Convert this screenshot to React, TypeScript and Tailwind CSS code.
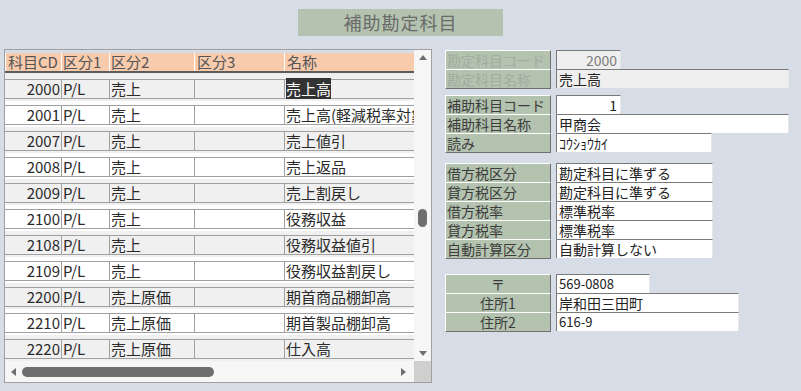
import React from "react";

const font = { fontFamily: '"Noto Sans CJK JP", "Noto Sans", sans-serif' };

type Row = { cd: string; k1: string; k2: string; k3: string; name: string; selected?: boolean };

const rows: Row[] = [
  { cd: "2000", k1: "P/L", k2: "売上", k3: "", name: "売上高", selected: true },
  { cd: "2001", k1: "P/L", k2: "売上", k3: "", name: "売上高(軽減税率対象)" },
  { cd: "2007", k1: "P/L", k2: "売上", k3: "", name: "売上値引" },
  { cd: "2008", k1: "P/L", k2: "売上", k3: "", name: "売上返品" },
  { cd: "2009", k1: "P/L", k2: "売上", k3: "", name: "売上割戻し" },
  { cd: "2100", k1: "P/L", k2: "売上", k3: "", name: "役務収益" },
  { cd: "2108", k1: "P/L", k2: "売上", k3: "", name: "役務収益値引" },
  { cd: "2109", k1: "P/L", k2: "売上", k3: "", name: "役務収益割戻し" },
  { cd: "2200", k1: "P/L", k2: "売上原価", k3: "", name: "期首商品棚卸高" },
  { cd: "2210", k1: "P/L", k2: "売上原価", k3: "", name: "期首製品棚卸高" },
  { cd: "2220", k1: "P/L", k2: "売上原価", k3: "", name: "仕入高" },
];

function Arrow({ dir }: { dir: "up" | "down" | "left" | "right" }) {
  const pts = {
    up: "0,5 4,0 8,5",
    down: "0,0 8,0 4,5",
    left: "5,0 5,8 0,4",
    right: "0,0 0,8 5,4",
  }[dir];
  const vertical = dir === "up" || dir === "down";
  return (
    <svg width={vertical ? 8 : 5} height={vertical ? 5 : 8} viewBox={vertical ? "0 0 8 5" : "0 0 5 8"}>
      <polygon points={pts} fill="#6e6e6e" />
    </svg>
  );
}

function Label({ text, last, disabled, center }: { text: string; last?: boolean; disabled?: boolean; center?: boolean }) {
  return (
    <div
      className={`w-[106px] h-[19px] bg-[#b3c3af] border-t border-l border-r border-t-white border-l-white border-r-[#6f6f6f] text-[14px] leading-[18px] px-[1px] whitespace-nowrap ${
        last ? "border-b border-b-[#6f6f6f] h-[20px]" : ""
      } ${disabled ? "text-[#a2ac9f]" : "text-[#3c3c3c]"} ${center ? "text-center" : ""}`}
    >
      {text}
    </div>
  );
}

function Value({
  text,
  w,
  right,
  gray,
  dim,
  size = "text-[14px]",
}: {
  text: string;
  w: string;
  right?: boolean;
  gray?: boolean;
  dim?: boolean;
  size?: string;
}) {
  return (
    <div
      className={`${w} h-[19px] border-t border-l border-r border-t-[#7a7a7a] border-l-[#7a7a7a] border-r-[#e6e6e6] ${
        gray ? "bg-[#efefef]" : "bg-white"
      } ${dim ? "text-[#7c7c7c]" : "text-[#222]"} ${right ? "text-right pr-[3px]" : "pl-[2px]"} ${size} leading-[18px] whitespace-nowrap`}
    >
      {text}
    </div>
  );
}

function FieldRow({ children }: { children: React.ReactNode }) {
  return <div className="flex items-start gap-[5px]">{children}</div>;
}

export default function App() {
  return (
    <div className="w-[801px] h-[391px] bg-[#d6dde7] overflow-hidden" style={font}>
      {/* Title */}
      <div className="flex justify-center pt-[9px]">
        <div className="w-[205px] h-[27px] bg-[#b3c3af] text-[#6a6a6a] text-[18px] leading-[27px] text-center tracking-[1px]">
          補助勘定科目
        </div>
      </div>

      <div className="flex items-start mt-[13px]">
        {/* List panel */}
        <div className="ml-[4px] w-[428px] h-[334px] border border-[#a0a0a0] flex flex-col">
          <div className="flex h-[311px]">
            <div className="w-[409px] flex flex-col overflow-hidden">
              <div className="h-[3px]" />
              <div className="h-[18px] bg-[#f8cbad] flex text-[15px] leading-[18px] text-[#555] border-l border-l-white">
                <div className="w-[56px] border-r border-r-white pl-[2px]">科目CD</div>
                <div className="w-[48px] border-r border-r-white pl-[1px]">区分1</div>
                <div className="w-[85px] border-r border-r-white pl-[1px]">区分2</div>
                <div className="w-[90px] border-r border-r-white pl-[2px]">区分3</div>
                <div className="flex-1 pl-[2px]">名称</div>
              </div>
              <div className="h-[2px] bg-[#5c5c5c]" />
              <div className="h-[2px] bg-[#ececec]" />
              {rows.map((r, i) => (
                <div key={r.cd} className={`h-[26px] pt-[4px] ${i % 2 === 0 ? "bg-[#f0f0f0]" : "bg-white"}`}>
                  <div className="h-[20px] border-y border-[#a0a0a0] flex text-[15px] leading-[18px] text-[#2a2a2a] whitespace-nowrap">
                    <div className="w-[57px] shrink-0 border-r border-r-[#a0a0a0] text-right pr-[1px]">{r.cd}</div>
                    <div className="w-[48px] shrink-0 border-r border-r-[#a0a0a0] pl-[1px]">{r.k1}</div>
                    <div className="w-[85px] shrink-0 border-r border-r-[#a0a0a0] pl-[1px]">{r.k2}</div>
                    <div className="w-[90px] shrink-0 border-r border-r-[#a0a0a0]">{r.k3}</div>
                    <div className="pl-[1px]">
                      {r.selected ? <span className="bg-[#333] text-white">{r.name}</span> : r.name}
                    </div>
                  </div>
                </div>
              ))}
            </div>
            {/* Vertical scrollbar */}
            <div className="w-[17px] bg-[#f6f6f6] flex flex-col items-center pt-[5px] pb-[5px]">
              <Arrow dir="up" />
              <div className="mt-[149px] w-[9px] h-[18px] rounded-full bg-[#6e6e6e]" />
              <div className="flex-1" />
              <Arrow dir="down" />
            </div>
          </div>
          {/* Horizontal scrollbar */}
          <div className="flex h-[21px]">
            <div className="w-[409px] bg-[#f6f6f6] flex items-center pl-[6px] pr-[8px]">
              <Arrow dir="left" />
              <div className="ml-[6px] w-[192px] h-[10px] rounded-full bg-[#6e6e6e]" />
              <div className="flex-1" />
              <Arrow dir="right" />
            </div>
            <div className="w-[17px] bg-[#cfcfcf]" />
          </div>
        </div>

        {/* Detail form */}
        <div className="ml-[13px] mt-[1px] flex flex-col">
          <div className="flex flex-col">
            <FieldRow>
              <Label text="勘定科目コード" disabled />
              <Value text="2000" w="w-[65px]" right gray dim />
            </FieldRow>
            <FieldRow>
              <Label text="勘定科目名称" disabled last />
              <Value text="売上高" w="w-[233px]" gray />
            </FieldRow>
          </div>

          <div className="flex flex-col mt-[6px]">
            <FieldRow>
              <Label text="補助科目コード" />
              <Value text="1" w="w-[65px]" right />
            </FieldRow>
            <FieldRow>
              <Label text="補助科目名称" />
              <Value text="甲商会" w="w-[233px]" />
            </FieldRow>
            <FieldRow>
              <Label text="読み" last />
              <Value text="ｺｳｼｮｳｶｲ" w="w-[156px]" />
            </FieldRow>
          </div>

          <div className="flex flex-col mt-[10px]">
            <FieldRow>
              <Label text="借方税区分" />
              <Value text="勘定科目に準ずる" w="w-[157px]" />
            </FieldRow>
            <FieldRow>
              <Label text="貸方税区分" />
              <Value text="勘定科目に準ずる" w="w-[157px]" />
            </FieldRow>
            <FieldRow>
              <Label text="借方税率" />
              <Value text="標準税率" w="w-[157px]" />
            </FieldRow>
            <FieldRow>
              <Label text="貸方税率" />
              <Value text="標準税率" w="w-[157px]" />
            </FieldRow>
            <FieldRow>
              <Label text="自動計算区分" last />
              <Value text="自動計算しない" w="w-[157px]" />
            </FieldRow>
          </div>

          <div className="flex flex-col mt-[15px]">
            <FieldRow>
              <Label text="〒" center />
              <Value text="569-0808" w="w-[94px]" size="text-[13px]" />
            </FieldRow>
            <FieldRow>
              <Label text="住所1" center />
              <Value text="岸和田三田町" w="w-[183px]" />
            </FieldRow>
            <FieldRow>
              <Label text="住所2" center last />
              <Value text="616-9" w="w-[183px]" size="text-[13px]" />
            </FieldRow>
          </div>
        </div>
      </div>
    </div>
  );
}
